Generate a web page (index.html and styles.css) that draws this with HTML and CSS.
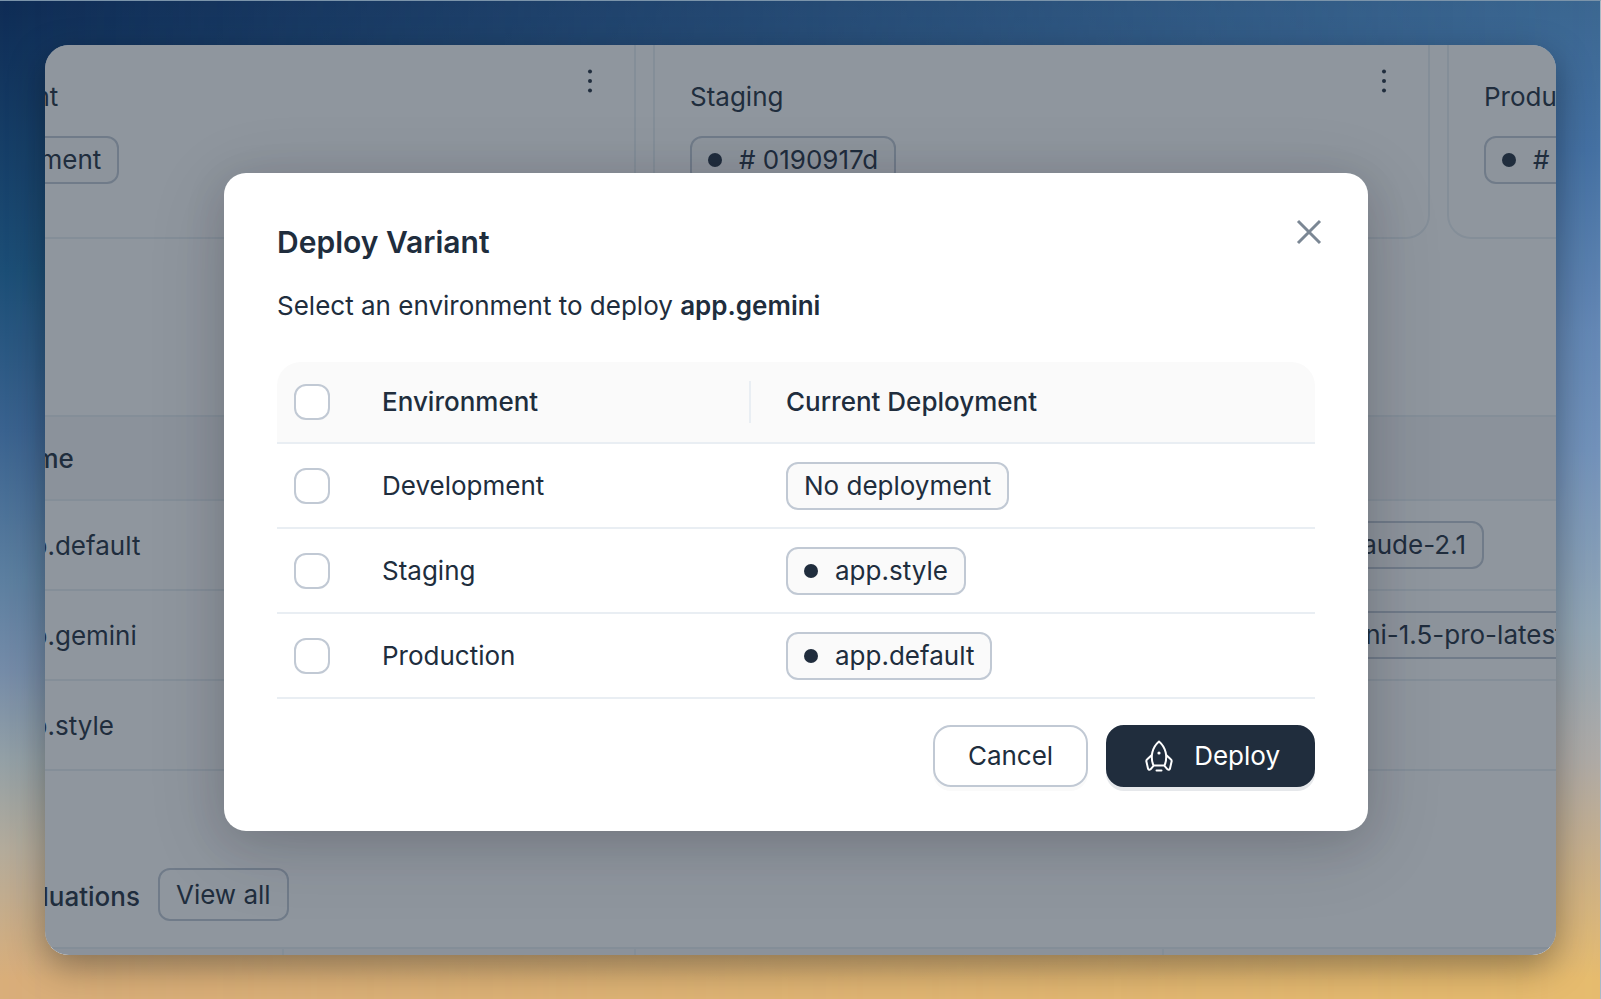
FILE: index.html
```html
<!DOCTYPE html>
<html lang="en">
<head>
<meta charset="utf-8">
<title>Deploy Variant</title>
<link rel="stylesheet" href="styles.css">
</head>
<body>
<div class="window">
  <main class="page">
    <section class="cards">
      <article class="card">
        <div><h2 class="card-title">Development</h2><span class="badge">No deployment</span></div>
        <button class="more" aria-label="Development options"><svg width="6" height="24" viewBox="0 0 6 24"><circle cx="3" cy="2.5" r="2"/><circle cx="3" cy="12" r="2"/><circle cx="3" cy="21.5" r="2"/></svg></button>
      </article>
      <article class="card">
        <div><h2 class="card-title">Staging</h2><span class="badge"><i class="dot"></i># 0190917d</span></div>
        <button class="more" aria-label="Staging options"><svg width="6" height="24" viewBox="0 0 6 24"><circle cx="3" cy="2.5" r="2"/><circle cx="3" cy="12" r="2"/><circle cx="3" cy="21.5" r="2"/></svg></button>
      </article>
      <article class="card">
        <div><h2 class="card-title">Production</h2><span class="badge"><i class="dot"></i># 0190917c</span></div>
      </article>
    </section>
    <table class="variants">
      <thead><tr><th>Name</th><th></th></tr></thead>
      <tbody>
        <tr><td>app.default</td><td><span class="badge badge-claude">claude-2.1</span></td></tr>
        <tr><td>app.gemini</td><td><span class="badge badge-gemini">gemini-1.5-pro-latest</span></td></tr>
        <tr><td>app.style</td><td></td></tr>
      </tbody>
    </table>
    <section class="evals">
      <h2 class="evals-title">Evaluations</h2>
      <button class="view-all">View all</button>
    </section>
    <div class="eval-columns"><span></span><span></span><span></span><span></span></div>
  </main>
  <div class="overlay">
    <section class="dialog" role="dialog" aria-modal="true" aria-labelledby="dialog-title">
      <header class="dialog-head">
        <h1 id="dialog-title">Deploy Variant</h1>
        <button class="close" aria-label="Close"><svg width="26" height="26" viewBox="0 0 26 26"><path d="M2 2 24 24M24 2 2 24"/></svg></button>
      </header>
      <p class="lead">Select an environment to deploy <strong>app.gemini</strong></p>
      <table class="envs">
        <thead>
          <tr><th class="check"><input type="checkbox" aria-label="Select all environments"></th><th class="env"><span>Environment</span></th><th>Current Deployment</th></tr>
        </thead>
        <tbody>
          <tr><td class="check"><input type="checkbox" id="env-dev"></td><td class="env"><label for="env-dev">Development</label></td><td><span class="badge">No deployment</span></td></tr>
          <tr><td class="check"><input type="checkbox" id="env-stg"></td><td class="env"><label for="env-stg">Staging</label></td><td><span class="badge"><i class="dot"></i>app.style</span></td></tr>
          <tr><td class="check"><input type="checkbox" id="env-prod"></td><td class="env"><label for="env-prod">Production</label></td><td><span class="badge"><i class="dot"></i>app.default</span></td></tr>
        </tbody>
      </table>
      <footer class="actions">
        <button class="btn">Cancel</button>
        <button class="btn btn-primary"><svg width="28" height="32" viewBox="0 0 28 32"><path d="M8.5 25.5C5 17 7 7.500 14 1.500C21 7.500 23 17 19.500 25.500ZM6.800 15 2 19.500a2 2 0 0 0-.6 2L3 28.500c.3 1.400 1.500 1.600 2.500.8l3-3.500M21.200 15 26 19.500a2 2 0 0 1 .6 2L25 28.500c-.3 1.400-1.500 1.600-2.500.8l-3-3.500M11.500 30.500h5"/><circle cx="14" cy="13" r="1.600"/></svg>Deploy</button>
      </footer>
    </section>
  </div>
</div>
</body>
</html>
```
FILE: styles.css
```css
:root {
  --ink: #202d3d;
  --line: #e9eef3;
  --edge: #c1c9d4;
  --soft: #fafafa;
}

* { box-sizing: border-box; }

body {
  margin: 0;
  min-height: 100vh;
  padding: 45px;
  padding-bottom: 44px;
  display: grid;
  position: relative;
  font: 400 26px/32px Inter, "Liberation Sans", sans-serif;
  color: var(--ink);
  background: linear-gradient(#0f2c55 0%, #1c4e76 27%, #3a628f 43%, #5c7fa0 58%, #748ba8 67%, #93a0a6 76%, #b3ab9b 85%, #d9ae7a 98%);
}

body::before {
  content: "";
  position: absolute;
  inset: 0;
  background: linear-gradient(#3b6791 0%, #4571a3 15%, #6488b5 33%, #7292ba 45%, #93a6b5 63%, #aeaaa6 76%, #cbb088 87%, #e6bb6e 98%);
  mask-image: linear-gradient(to right, transparent, #000);
}

/* light hairline along the top and right edges */
body::after {
  content: "";
  position: absolute;
  inset: 0;
  border-top: 1px solid #7b94aa;
  border-right: 1px solid #a9b9c4;
  pointer-events: none;
}

button {
  font: inherit;
  color: inherit;
  background: none;
  border: 0;
  padding: 0;
}

h1, h2, p { margin: 0; }

.window {
  position: relative;
  min-width: 0;
  overflow: hidden;
  border-radius: 24px;
  background: #fff;
  box-shadow: 0 12px 36px rgb(0 0 0 / 36%);
}

.page { margin-left: -186px; height: 0; min-width: 0; }

.cards { display: flex; gap: 17px; }

.card {
  flex: 0 0 777px;
  display: flex;
  justify-content: space-between;
  align-items: flex-start;
  height: 194px;
  padding: 24px 41px 0 35px;
  border: 2px solid var(--line);
  border-top: 0;
  border-radius: 0 0 24px 24px;
}

.card-title {
  font-size: 26px;
  font-weight: 400;
  margin: 12px 0 23px;
}

.more { display: flex; }
.more svg { fill: var(--ink); }

.badge {
  display: inline-flex;
  align-items: center;
  height: 48px;
  padding: 0 16px;
  border: 2px solid var(--edge);
  border-radius: 12px;
  background: var(--soft);
  white-space: nowrap;
}
.badge-claude { margin-left: 62px; }
.badge-gemini { margin-left: 26px; }

.dot {
  width: 14px;
  height: 14px;
  margin-right: 17px;
  border-radius: 50%;
  background: var(--ink);
}

table { border-collapse: separate; border-spacing: 0; }
th { text-align: left; font-weight: 500; }

.variants {
  width: 100%;
  table-layout: fixed;
  margin-top: 176px;
  border-top: 2px solid var(--line);
}
.variants th, .variants td {
  padding: 0;
  height: 90px;
  border-bottom: 2px solid var(--line);
}
.variants th { height: 84px; background: #f6f7f8; }
.variants th:first-child, .variants td:first-child { padding: 2px 0 0 142px; width: 1402px; }

.evals {
  display: flex;
  align-items: center;
  gap: 18px;
  margin: 97px 0 26px 138px;
}
.evals-title { font-size: 26px; font-weight: 500; padding-top: 4px; }
.view-all {
  height: 53px;
  padding: 0 16px;
  border: 2px solid var(--edge);
  border-radius: 12px;
}

.eval-columns {
  display: grid;
  grid-template-columns: 425px 352px 528px 1fr;
  height: 40px;
  background: #f6f7f8;
  border-top: 2px solid var(--line);
}
.eval-columns span { border-right: 2px solid var(--line); }

.overlay {
  position: absolute;
  inset: 0;
  display: grid;
  place-items: center;
  padding: 4px 9px 0 0;
  background: rgb(32 45 61 / 50%);
}

.dialog {
  width: 76%;
  min-width: 1144px;
  padding: 42px 53px 44px;
  border-radius: 22px;
  background: #fff;
  box-shadow: 0 16px 80px rgb(30 20 40 / 14%), 0 8px 40px rgb(30 30 30 / 14%);
}

.dialog-head {
  display: flex;
  justify-content: space-between;
  align-items: flex-start;
}
.dialog-head h1 {
  padding-top: 7px;
  font-size: 30px;
  line-height: 40px;
  font-weight: 600;
}
.close { display: flex; padding: 4px; margin-right: -11px; }
.close svg { fill: none; stroke: #7b8794; stroke-width: 3; }

.lead { margin: 28px 0 40px; }
.lead strong { font-weight: 600; }

.envs { width: 100%; }
.envs th, .envs td {
  height: 85px;
  padding: 0;
  border-bottom: 2px solid var(--line);
}
.envs th { height: 82px; background: var(--soft); }
.envs th:first-child { border-top-left-radius: 24px; }
.envs th:last-child { border-top-right-radius: 24px; }
.envs .check { width: 105px; padding-left: 17px; }
.envs .env { width: 404px; }
.envs .badge, .envs input { vertical-align: middle; }
.env span {
  display: block;
  width: 369px;
  padding: 5px 0;
  border-right: 2px solid var(--line);
}

.envs input {
  appearance: none;
  width: 36px;
  height: 36px;
  margin: 0;
  border: 2px solid var(--edge);
  border-radius: 12px;
  background: #fff;
}

.actions {
  display: flex;
  justify-content: flex-end;
  gap: 18px;
  margin-top: 26px;
}
.btn {
  display: flex;
  align-items: center;
  gap: 21px;
  height: 62px;
  padding: 0 33px;
  border: 2px solid var(--edge);
  border-radius: 18px;
  box-shadow: 0 4px 0 #fafafa;
}
.btn-primary {
  color: #fff;
  background: var(--ink);
  border-color: var(--ink);
  padding: 0 33px 0 37px;
  box-shadow: 0 4px 0 #e6e8eb;
}
.btn svg { fill: none; stroke: #fff; stroke-width: 2; stroke-linecap: round; stroke-linejoin: round; }
.btn circle { fill: #fff; stroke: none; }
```
